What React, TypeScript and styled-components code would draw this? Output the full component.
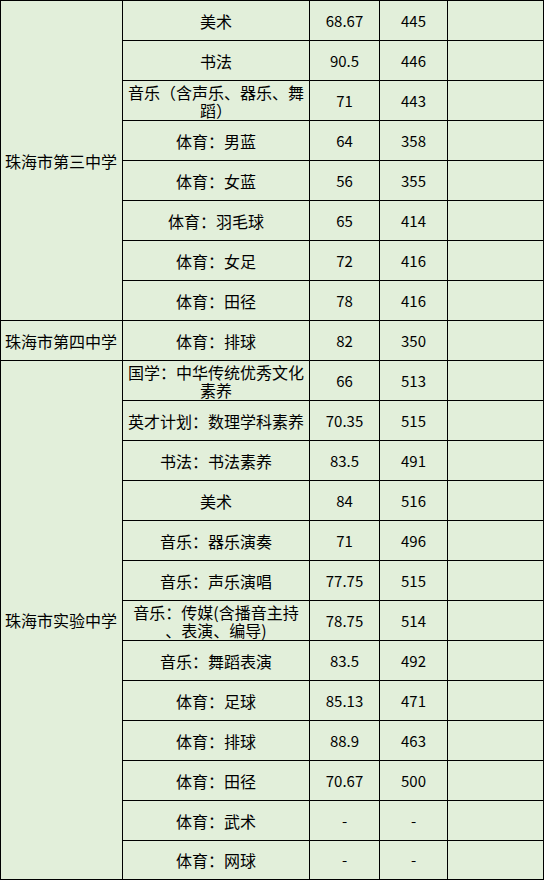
import styled, { createGlobalStyle } from "styled-components";

type ItemRow = {
  lines: string[];
  score: string;
  rank: string;
};

type SchoolGroup = {
  name: string;
  rows: ItemRow[];
};

const data: SchoolGroup[] = [
  {
    name: "珠海市第三中学",
    rows: [
      { lines: ["美术"], score: "68.67", rank: "445" },
      { lines: ["书法"], score: "90.5", rank: "446" },
      { lines: ["音乐（含声乐、器乐、舞", "蹈）"], score: "71", rank: "443" },
      { lines: ["体育：男蓝"], score: "64", rank: "358" },
      { lines: ["体育：女蓝"], score: "56", rank: "355" },
      { lines: ["体育：羽毛球"], score: "65", rank: "414" },
      { lines: ["体育：女足"], score: "72", rank: "416" },
      { lines: ["体育：田径"], score: "78", rank: "416" },
    ],
  },
  {
    name: "珠海市第四中学",
    rows: [{ lines: ["体育：排球"], score: "82", rank: "350" }],
  },
  {
    name: "珠海市实验中学",
    rows: [
      { lines: ["国学：中华传统优秀文化", "素养"], score: "66", rank: "513" },
      { lines: ["英才计划：数理学科素养"], score: "70.35", rank: "515" },
      { lines: ["书法：书法素养"], score: "83.5", rank: "491" },
      { lines: ["美术"], score: "84", rank: "516" },
      { lines: ["音乐：器乐演奏"], score: "71", rank: "496" },
      { lines: ["音乐：声乐演唱"], score: "77.75", rank: "515" },
      { lines: ["音乐：传媒(含播音主持", "、表演、编导)"], score: "78.75", rank: "514" },
      { lines: ["音乐：舞蹈表演"], score: "83.5", rank: "492" },
      { lines: ["体育：足球"], score: "85.13", rank: "471" },
      { lines: ["体育：排球"], score: "88.9", rank: "463" },
      { lines: ["体育：田径"], score: "70.67", rank: "500" },
      { lines: ["体育：武术"], score: "-", rank: "-" },
      { lines: ["体育：网球"], score: "-", rank: "-" },
    ],
  },
];

const GlobalStyle = createGlobalStyle`
  html, body {
    margin: 0;
    padding: 0;
    background: #ffffff;
  }
  body {
    font-family: "Noto Sans CJK SC", "Noto Sans", sans-serif;
    color: #000000;
  }
`;

const Sheet = styled.div`
  display: grid;
  grid-template-columns: 121px 186px 69px 67px 95px;
  grid-template-rows: repeat(21, 39px) 38px;
  gap: 1px;
  padding: 1px;
  width: max-content;
  background: #000000;
`;

const Cell = styled.div`
  display: flex;
  flex-direction: column;
  align-items: center;
  justify-content: center;
  background: #e2efda;
  font-size: 16px;
  line-height: 18px;
  text-align: center;
`;

const SchoolCell = styled(Cell)<{ $span: number }>`
  grid-row: span ${(p) => p.$span};
  align-items: flex-start;
  padding: 0 4px;
  white-space: nowrap;
`;

const ItemLine = styled.span`
  display: block;
  line-height: 18px;
  white-space: nowrap;
`;

const NumCell = styled(Cell)`
  font-size: 15px;
`;

export default function App() {
  return (
    <>
      <GlobalStyle />
      <Sheet>
        {data.map((group) => [
          <SchoolCell key={group.name} $span={group.rows.length}>
            {group.name}
          </SchoolCell>,
          ...group.rows.map((row, i) => [
            <Cell key={`${group.name}-item-${i}`}>
              {row.lines.map((line) => (
                <ItemLine key={line}>{line}</ItemLine>
              ))}
            </Cell>,
            <NumCell key={`${group.name}-score-${i}`}>{row.score}</NumCell>,
            <NumCell key={`${group.name}-rank-${i}`}>{row.rank}</NumCell>,
            <Cell key={`${group.name}-blank-${i}`} />,
          ]),
        ])}
      </Sheet>
    </>
  );
}
